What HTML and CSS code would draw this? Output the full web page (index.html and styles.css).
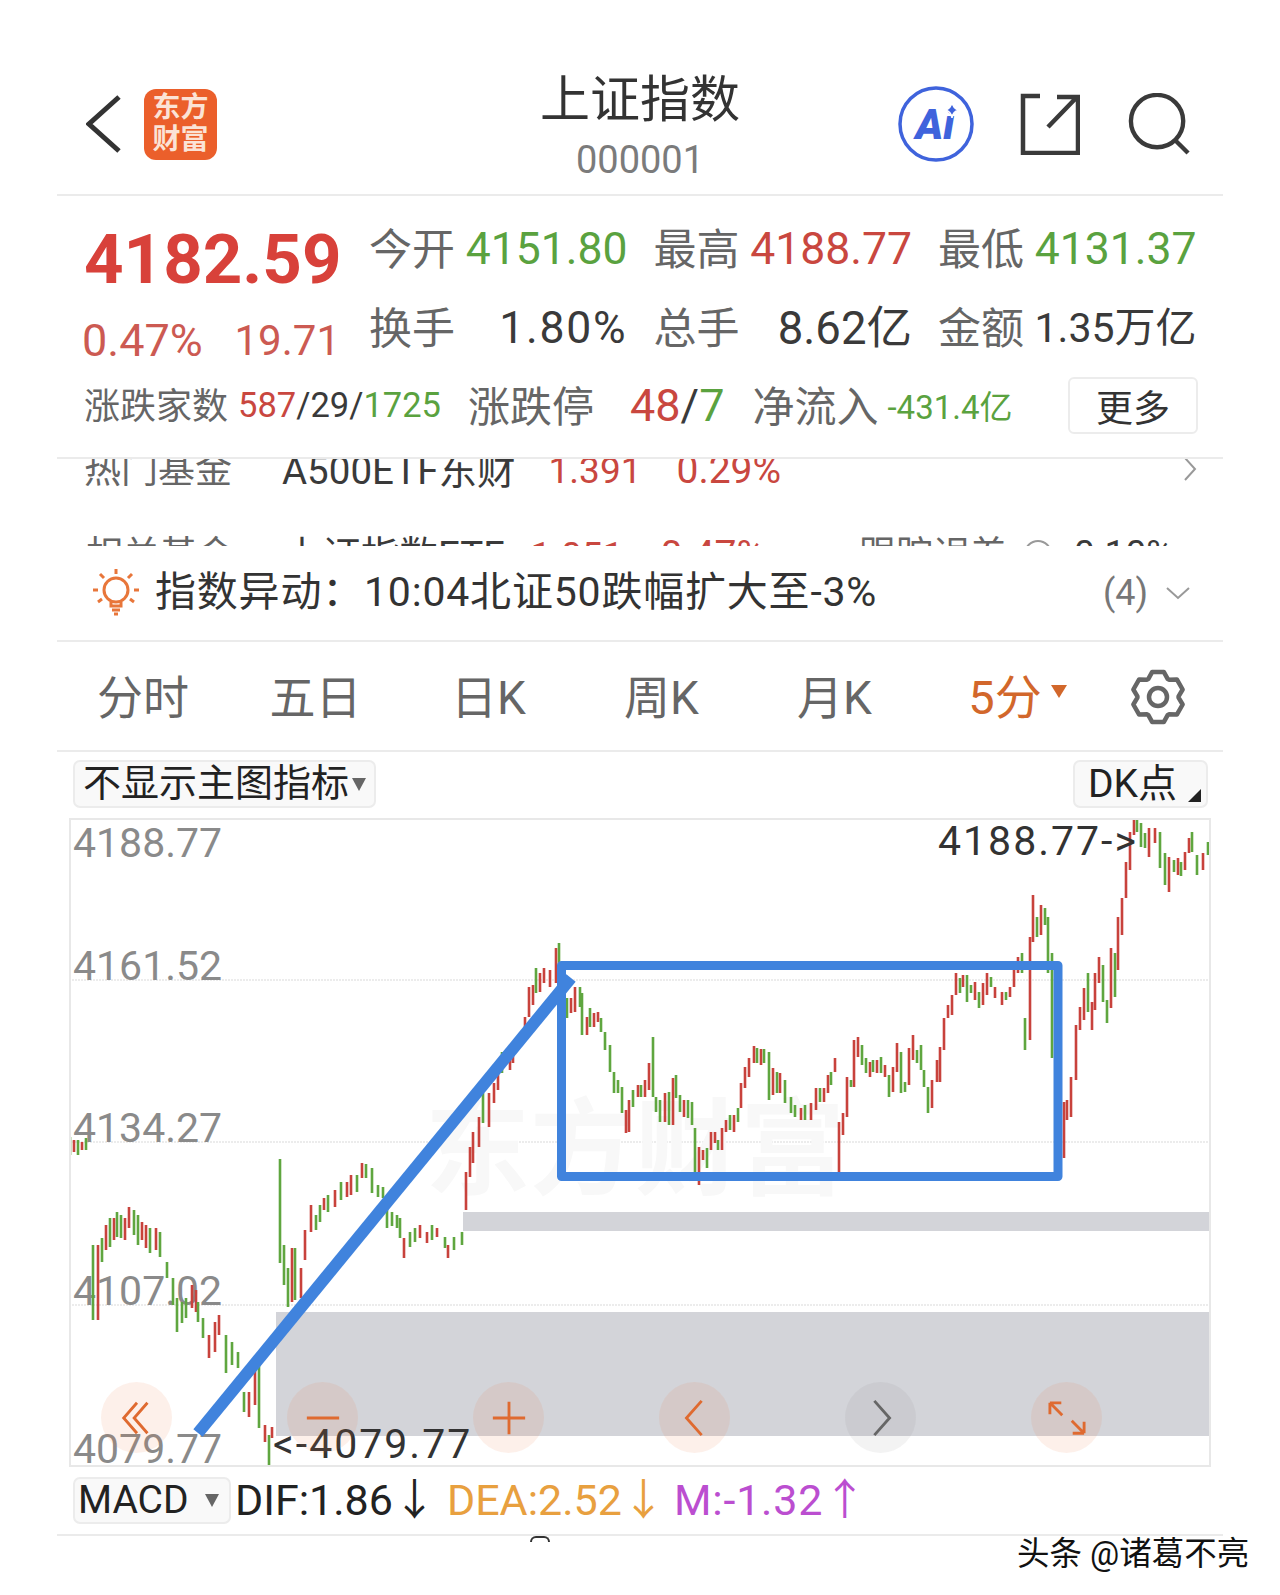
FILE: index.html

```html
<!DOCTYPE html>
<html lang="zh-CN">
<head>
  <meta charset="UTF-8">
  <title>上证指数</title>
  <link rel="stylesheet" href="styles.css">
</head>
<body>
<div class="page">
  <div class="screen">

    <header class="top-bar">
      <div class="top-left">
        <svg class="back-icon" viewBox="0 0 36 60"><path d="M33 3 L3 30 L33 57"/></svg>
        <div class="logo"><span>东方</span><span>财富</span></div>
      </div>
      <div class="top-title">
        <h1>上证指数</h1>
        <div class="code">000001</div>
      </div>
      <div class="top-right">
        <svg class="ai-icon" viewBox="0 0 76 76">
          <circle cx="38" cy="38" r="36"/>
          <text x="37" y="53">Ai</text>
          <path d="M54 16 Q55 23 61 24 Q55 25 54 32 Q53 25 47 24 Q53 23 54 16Z"/>
        </svg>
        <svg class="line-icon" viewBox="0 0 62 62"><path d="M22 3 H5 V60 H60 V25 M30 34 L59 4 M39 4 H60 V25"/></svg>
        <svg class="line-icon" viewBox="0 0 64 64"><circle cx="30" cy="29" r="27"/><path d="M49 49 L62 62"/></svg>
      </div>
    </header>

    <section class="quote">
      <div class="quote-main">
        <div class="price-box">
          <div class="price">4182.59</div>
          <div class="change"><span>0.47%</span><span class="change-num">19.71</span></div>
        </div>
        <div class="stat-grid">
          <div class="stat"><span class="label">今开</span><span class="green">4151.80</span></div>
          <div class="stat"><span class="label">最高</span><span class="red">4188.77</span></div>
          <div class="stat"><span class="label">最低</span><span class="green">4131.37</span></div>
          <div class="stat"><span class="label">换手</span><span class="stat-wide">1.80%</span></div>
          <div class="stat"><span class="label">总手</span><span class="stat-cjk">8.62亿</span></div>
          <div class="stat"><span class="label">金额</span><span class="stat-cjk stat-small">1.35万亿</span></div>
        </div>
      </div>
      <div class="quote-extra">
        <span class="label extra-count">涨跌家数</span>
        <span class="extra-nums"><span class="red">587</span>/29/<span class="green">1725</span></span>
        <span class="label extra-limit">涨跌停</span>
        <span class="limit-nums"><span class="red">48</span>/<span class="green">7</span></span>
        <span class="label extra-flow">净流入</span>
        <span class="flow-num green">-431.4亿</span>
        <button class="more-btn">更多</button>
      </div>
    </section>

    <section class="funds">
      <div class="fund-row first">
        <span class="label fund-name">热门基金</span>
        <span class="fund-title">A500ETF东财</span>
        <span class="red fund-val">1.391</span>
        <span class="red fund-pct">0.29%</span>
        <svg class="fund-arrow" viewBox="0 0 14 26"><path d="M2 2 L12 13 L2 24"/></svg>
      </div>
      <div class="fund-row second">
        <span class="label fund-name">相关基金</span>
        <span class="fund-title">上证指数ETF</span>
        <span class="red fund-val">1.051</span>
        <span class="red fund-pct">0.47%</span>
        <span class="label fund-track">跟踪误差</span>
        <span class="track-dot"></span>
        <span class="fund-track-val">0.10%</span>
      </div>
    </section>

    <section class="alert">
      <svg class="bulb" viewBox="0 0 48 50">
        <circle cx="24" cy="22" r="12"/>
        <path d="M19 34 V38 H29 V34 M20 42 H28 M22 46 H26"/>
        <path d="M24 1 V6 M8 6 L12 10 M40 6 L36 10 M1 22 H6 M42 22 H47 M6 34 L10 31 M42 34 L38 31"/>
      </svg>
      <span class="alert-text">指数异动：10:04北证50跌幅扩大至-3%</span>
      <span class="alert-count">(4)</span>
      <svg class="alert-arrow" viewBox="0 0 26 14"><path d="M2 2 L13 12 L24 2"/></svg>
    </section>

    <nav class="tabs">
      <a class="tab first-tab">分时</a>
      <a class="tab">五日</a>
      <a class="tab">日K</a>
      <a class="tab">周K</a>
      <a class="tab">月K</a>
      <a class="tab active">5分<i class="tab-caret"></i></a>
      <svg class="gear" viewBox="-14 -14 28 28">
        <path d="M-4.5 -8.5 L-2.7 -11.7 L2.7 -11.7 L4.5 -8.5 L5.1 -8.1 L8.8 -8.2 L11.5 -3.5 L9.6 -.3 L9.6 .3 L11.5 3.5 L8.8 8.2 L5.1 8.1 L4.5 8.5 L2.7 11.7 L-2.7 11.7 L-4.5 8.5 L-5.1 8.1 L-8.8 8.2 L-11.5 3.5 L-9.6 .3 L-9.6 -.3 L-11.5 -3.5 L-8.8 -8.2 L-5.1 -8.1Z"/>
        <circle r="4.2"/>
      </svg>
    </nav>

    <div class="chart-bar">
      <button class="chip chip-main">不显示主图指标<i class="chip-caret"></i></button>
      <button class="chip chip-dk">DK点<i class="chip-corner"></i></button>
    </div>

    <div class="chart">
      <!-- viewBox uses page coordinates so the candles can be read straight off the picture -->
      <svg class="chart-svg" viewBox="69 818 1142 649">
        <rect class="zone" x="463" y="1212" width="748" height="19"/>
        <rect class="zone" x="276" y="1312" width="935" height="124"/>
        <path class="grid" d="M69 980 H1211 M69 1142 H1211 M69 1305 H1211"/>
        <text class="watermark" x="425" y="1186">东方财富</text>
        <text class="axis" x="73" y="857">4188.77</text>
        <text class="axis" x="73" y="980">4161.52</text>
        <text class="axis" x="73" y="1142">4134.27</text>
        <text class="axis" x="73" y="1305">4107.02</text>
        <text class="axis" x="73" y="1463">4079.77</text>

        <path class="up" d="M74 1140V1152 M82 1142V1150 M98 1245V1320 M106 1225V1250 M114 1218V1240 M125 1218V1240 M129 1207V1228 M142 1222V1240 M146 1225V1248 M156 1228V1250 M192 1285V1308 M196 1290V1312 M209 1335V1358 M215 1322V1352 M219 1315V1335 M249 1392V1417 M255 1365V1405 M265 1425V1442 M272 1427V1438 M292 1248V1302 M301 1268V1298 M305 1230V1260 M311 1205V1232 M324 1198V1210 M335 1190V1207 M347 1182V1197 M351 1175V1195 M362 1163V1178 M404 1238V1258 M420 1225V1238 M427 1232V1243 M437 1228V1237 M448 1245V1258 M466 1172V1210 M470 1147V1177 M473 1132V1163 M479 1117V1147 M489 1093V1127 M494 1083V1103 M498 1073V1090 M510 1057V1070 M513 1043V1063 M525 1017V1040 M529 987V1017 M533 985V1005 M540 973V992 M544 968V983 M550 970V987 M556 948V983 M571 998V1013 M575 987V1012 M587 1017V1035 M594 1013V1027 M598 1012V1022 M626 1110V1133 M629 1100V1132 M638 1085V1097 M645 1080V1097 M649 1063V1090 M665 1093V1122 M673 1078V1125 M684 1100V1117 M699 1147V1185 M703 1150V1160 M711 1132V1150 M715 1132V1143 M722 1128V1150 M726 1120V1132 M734 1115V1132 M741 1083V1108 M745 1067V1088 M749 1058V1077 M754 1046V1063 M761 1049V1065 M773 1068V1095 M780 1073V1093 M801 1108V1120 M811 1103V1120 M816 1088V1110 M824 1088V1102 M828 1075V1093 M835 1058V1072 M839 1122V1172 M843 1113V1135 M847 1077V1117 M854 1040V1087 M858 1037V1057 M870 1062V1077 M877 1060V1073 M885 1065V1077 M893 1067V1092 M897 1043V1072 M909 1048V1085 M913 1035V1060 M932 1080V1108 M937 1060V1082 M940 1047V1082 M944 1018V1050 M948 1005V1018 M952 995V1015 M956 973V995 M963 975V987 M975 982V1000 M983 983V1005 M987 973V995 M995 987V998 M1002 992V1005 M1010 987V997 M1014 968V987 M1018 957V973 M1030 937V1040 M1033 895V942 M1041 905V935 M1064 1102V1158 M1067 1100V1120 M1071 1077V1117 M1076 1025V1080 M1080 1007V1030 M1084 988V1020 M1092 1002V1030 M1095 973V1010 M1099 957V983 M1111 948V1008 M1118 917V970 M1122 898V935 M1126 862V898 M1130 832V870 M1134 820V835 M1149 828V857 M1155 828V843 M1169 857V892 M1178 858V875 M1185 852V870 M1189 838V853 M1203 853V870"/>

        <path class="down" d="M70 1137V1155 M78 1140V1155 M86 1138V1150 M93 1245V1320 M102 1238V1262 M110 1218V1247 M117 1212V1237 M121 1215V1238 M134 1210V1235 M138 1215V1245 M150 1228V1253 M160 1232V1257 M167 1262V1278 M173 1278V1305 M177 1298V1332 M182 1302V1323 M186 1298V1318 M198 1302V1322 M203 1318V1338 M226 1335V1373 M232 1342V1365 M238 1352V1368 M244 1392V1412 M259 1362V1428 M269 1435V1467 M280 1159V1263 M284 1245V1285 M288 1268V1307 M295 1248V1300 M316 1215V1230 M320 1205V1222 M328 1195V1212 M341 1182V1200 M357 1175V1192 M366 1164V1178 M372 1168V1193 M378 1185V1197 M383 1187V1198 M387 1208V1228 M392 1212V1226 M397 1215V1228 M400 1218V1238 M410 1232V1247 M415 1228V1242 M432 1225V1240 M445 1237V1248 M454 1237V1250 M462 1232V1245 M483 1093V1123 M502 1052V1073 M536 968V993 M559 943V973 M567 998V1018 M580 987V1007 M582 993V1035 M590 1008V1027 M601 1018V1032 M605 1032V1050 M610 1045V1072 M614 1072V1093 M618 1080V1093 M622 1087V1113 M633 1090V1107 M641 1085V1097 M653 1037V1097 M656 1097V1112 M660 1100V1122 M669 1092V1125 M676 1075V1098 M680 1095V1112 M688 1100V1118 M692 1102V1125 M695 1128V1172 M707 1148V1168 M718 1140V1150 M730 1115V1130 M738 1108V1122 M757 1048V1063 M764 1049V1063 M769 1052V1100 M777 1072V1093 M785 1080V1103 M791 1097V1113 M795 1105V1117 M805 1105V1120 M820 1088V1102 M831 1072V1085 M851 1080V1087 M862 1045V1065 M866 1058V1073 M873 1060V1072 M881 1057V1073 M889 1075V1097 M901 1052V1093 M905 1082V1092 M917 1050V1063 M921 1045V1070 M924 1070V1087 M928 1087V1113 M960 978V993 M967 975V1002 M971 985V993 M979 992V1008 M991 977V987 M1006 992V1000 M1022 953V973 M1025 1018V1050 M1037 917V937 M1045 908V925 M1048 917V973 M1052 953V1058 M1088 973V1012 M1103 965V1002 M1107 1000V1023 M1115 953V997 M1137 817V832 M1141 823V847 M1145 833V848 M1160 832V868 M1165 853V885 M1174 860V872 M1181 862V876 M1192 832V852 M1197 855V875 M1208 842V855"/>

        <text class="mark" x="938" y="855">4188.77-&gt;</text>
        <text class="mark" x="273" y="1458">&lt;-4079.77</text>

        <path class="blue-line" d="M198 1433 L571 978"/>
        <rect class="blue-box" x="561.5" y="965.5" width="496.5" height="211"/>
      </svg>

      <div class="chart-btns">
        <a class="round-btn"><svg viewBox="0 0 40 40"><path class="btn-o" d="M20 4 L6 20 L20 36 M31 4 L17 20 L31 36"/></svg></a>
        <a class="round-btn"><svg viewBox="0 0 40 40"><path class="btn-o" d="M3 20 H37"/></svg></a>
        <a class="round-btn"><svg viewBox="0 0 40 40"><path class="btn-o" d="M3 20 H37 M20 3 V37"/></svg></a>
        <a class="round-btn"><svg viewBox="0 0 40 40"><path class="btn-o" d="M27 2 L11 20 L27 38"/></svg></a>
        <a class="round-btn grey"><svg viewBox="0 0 40 40"><path class="btn-g" d="M13 2 L29 20 L13 38"/></svg></a>
        <a class="round-btn"><svg viewBox="0 0 40 40"><path class="btn-o" d="M2 4 H14 M2 4 V16 M2 4 L15 17 M38 36 H26 M38 36 V24 M38 36 L25 23"/></svg></a>
      </div>
    </div>

    <div class="macd-row">
      <button class="chip chip-macd">MACD<i class="chip-caret macd-caret"></i></button>
      <span class="macd-val">DIF:1.86<span class="arrow">↓</span></span>
      <span class="macd-val dea">DEA:2.52<span class="arrow">↓</span></span>
      <span class="macd-val m">M:-1.32<span class="arrow">↑</span></span>
    </div>
    <div class="next-top"></div>
  </div>

  <div class="credit">头条 @诸葛不亮</div>
</div>
</body>
</html>
```

FILE: styles.css

```css
* {
  box-sizing: border-box;
}
html, body {
  margin: 0;
  padding: 0;
  background: #fff;
}
body {
  font-family: Roboto, "Noto Sans CJK SC", sans-serif;
  color: #3a3a3a;
}
button {
  font-family: inherit;
  cursor: pointer;
}
.page {
  position: relative;
  width: 1280px;
  height: 1595px;
  overflow: hidden;
}
.screen {
  width: 1166px;
  margin-left: 57px;
  padding-top: 61px;
}
.red { color: #c9473f; }
.green { color: #5aa23f; }
.label { color: #666; }

/* top bar */
.top-bar {
  display: grid;
  grid-template-columns: 1fr auto 1fr;
  height: 135px;
  border-bottom: 2px solid #ebebeb;
}
.top-left {
  display: flex;
  align-items: center;
  height: 126px;
  padding-left: 29px;
}
.back-icon {
  width: 36px;
  height: 60px;
  margin-right: 22px;
}
.back-icon path {
  fill: none;
  stroke: #333;
  stroke-width: 5;
}
.logo {
  display: flex;
  flex-direction: column;
  align-items: center;
  justify-content: center;
  width: 73px;
  height: 71px;
  background: #eb5f2b;
  border-radius: 12px;
  color: #fbe3d6;
  font-size: 28px;
  font-weight: 700;
  line-height: 32px;
}
.top-title {
  text-align: center;
  padding-top: 9px;
}
.top-title h1 {
  margin: 0;
  font-size: 50px;
  font-weight: 400;
  line-height: 60px;
  color: #333;
}
.code {
  margin-top: 8px;
  font-size: 38px;
  line-height: 44px;
  color: #7b7b7b;
}
.top-right {
  display: flex;
  align-items: center;
  justify-content: flex-end;
  height: 126px;
  padding-right: 33px;
}
.ai-icon {
  width: 76px;
  height: 76px;
  margin-right: 44px;
}
.ai-icon circle {
  fill: none;
  stroke: #3f63dc;
  stroke-width: 3.5;
}
.ai-icon text {
  font-size: 42px;
  font-weight: 900;
  font-style: italic;
  text-anchor: middle;
  fill: #3f63dc;
}
.ai-icon path {
  fill: #3f63dc;
  stroke: #fff;
  stroke-width: 1.5;
}
.line-icon {
  width: 62px;
  height: 62px;
  margin-left: 0;
}
.line-icon + .line-icon {
  margin-left: 48px;
}
.line-icon path, .line-icon circle {
  fill: none;
  stroke: #3a3a3a;
  stroke-width: 4.5;
}

/* quote block */
.quote {
  height: 263px;
  padding-top: 13px;
  border-bottom: 2px solid #ebebeb;
}
.quote-main {
  display: flex;
}
.price-box {
  width: 312px;
  padding-left: 27px;
}
.price {
  margin-top: 16px;
  font-size: 69px;
  font-weight: 700;
  line-height: 70px;
  color: #d8413a;
}
.change {
  display: flex;
  justify-content: space-between;
  width: 258px;
  margin-top: 24px;
  margin-left: -2px;
  font-size: 45px;
  line-height: 44px;
  color: #cc5a52;
}
.change-num {
  font-size: 42px;
}
.stat-grid {
  display: grid;
  grid-template-columns: repeat(3, 258.5px);
  column-gap: 26px;
  grid-auto-rows: 79px;
}
.stat {
  display: flex;
  justify-content: space-between;
  align-items: center;
  font-size: 44.5px;
  white-space: nowrap;
}
.stat .label {
  margin-top: -6px;
  font-size: 43px;
}
.stat-wide {
  letter-spacing: 1.8px;
}
.stat-cjk {
  margin-top: -7px;
  font-size: 45.5px;
}
.stat-cjk.stat-small {
  font-size: 41px;
}
.quote-extra {
  display: flex;
  align-items: center;
  height: 76px;
  padding-left: 27px;
}
.quote-extra .label {
  margin-top: -4px;
}
.extra-count {
  font-size: 36px;
}
.extra-nums {
  margin-left: 10px;
  font-size: 34.5px;
}
.extra-limit {
  margin-left: 27px;
  font-size: 42px;
}
.limit-nums {
  margin-left: 36px;
  font-size: 45px;
}
.extra-flow {
  margin-left: 28px;
  font-size: 42px;
}
.flow-num {
  margin-left: 9px;
  font-size: 33px;
}
.more-btn {
  width: 130px;
  height: 57px;
  margin-left: auto;
  margin-right: 25px;
  padding: 0;
  background: #fff;
  border: 2px solid #ececec;
  border-radius: 6px;
  color: #333;
  font-size: 37px;
}

/* fund rows, cut off by the scroll area */
.funds {
  height: 87px;
  overflow: hidden;
}
.fund-row {
  display: flex;
  align-items: center;
  height: 85px;
  font-size: 37px;
  white-space: nowrap;
}
.fund-row.first {
  margin-top: -33px;
  padding-left: 27px;
}
.fund-row.second {
  padding-left: 29px;
}
.fund-row .label {
  margin-top: -4px;
}
.fund-name {
  width: 198px;
}
.fund-title {
  margin-top: -4px;
  font-size: 38.5px;
}
.fund-pct {
  font-size: 39px;
}
.fund-val, .fund-pct {
  margin-top: 3px;
}
.first .fund-val {
  margin-left: 33px;
}
.first .fund-pct {
  margin-left: 35px;
}
.second .fund-val {
  margin-left: 26px;
}
.second .fund-pct {
  margin-left: 37px;
}
.fund-arrow {
  width: 14px;
  height: 26px;
  margin-left: auto;
  margin-right: 26px;
}
.fund-arrow path {
  fill: none;
  stroke: #999;
  stroke-width: 2;
}
.fund-track {
  margin-left: 94px;
}
.track-dot {
  width: 28px;
  height: 28px;
  margin-left: 17px;
  border: 2px solid #999;
  border-radius: 50%;
}
.fund-track-val {
  margin-left: 22px;
}

/* alert */
.alert {
  display: flex;
  align-items: center;
  height: 96px;
  padding-left: 35px;
  border-bottom: 2px solid #ebebeb;
}
.bulb {
  width: 48px;
  height: 50px;
  margin-right: 15px;
}
.bulb circle, .bulb path {
  fill: none;
  stroke: #e8763a;
  stroke-width: 3;
}
.alert-text {
  font-size: 41px;
  letter-spacing: .8px;
  color: #333;
  margin-top: -10px;
}
.alert-count {
  margin-left: auto;
  font-size: 36px;
  color: #777;
}
.alert-arrow {
  width: 26px;
  height: 14px;
  margin: 0 32px 0 17px;
}
.alert-arrow path {
  fill: none;
  stroke: #999;
  stroke-width: 2;
}

/* period tabs */
.tabs {
  display: flex;
  align-items: center;
  height: 110px;
  border-bottom: 2px solid #ebebeb;
}
.tab {
  width: 173px;
  margin-top: -5px;
  text-align: center;
  font-size: 46px;
  color: #666;
}
.first-tab {
  width: 172px;
}
.tab.active {
  position: relative;
  width: 168px;
  font-size: 47px;
  color: #d2672b;
}
.tab-caret {
  position: absolute;
  left: 130px;
  top: 26px;
  border-left: 8px solid transparent;
  border-right: 8px solid transparent;
  border-top: 13px solid #d2672b;
}
.gear {
  width: 60px;
  height: 60px;
  margin-left: 39px;
  margin-top: 1px;
}
.gear path, .gear circle {
  fill: none;
  stroke: #666;
  stroke-width: 2.1;
  stroke-linejoin: round;
}

/* chart */
.chart-bar {
  display: flex;
  justify-content: space-between;
  height: 66px;
  padding: 8px 15px 0 16px;
}
.chip {
  height: 48px;
  padding: 0;
  background: #f9f9f9;
  border: 2px solid #ececec;
  border-radius: 7px;
  color: #222;
}
.chip-main {
  display: flex;
  align-items: center;
  width: 303px;
  padding: 0 0 10px 8px;
  font-size: 38px;
}
.chip-caret {
  margin-left: 3px;
  margin-top: 10px;
  border-left: 7px solid transparent;
  border-right: 7px solid transparent;
  border-top: 13px solid #666;
}
.chip-dk {
  position: relative;
  display: flex;
  align-items: center;
  width: 135px;
  padding: 0 0 8px 13px;
  font-size: 39px;
}
.chip-corner {
  position: absolute;
  right: 5px;
  bottom: 4px;
  border-left: 13px solid transparent;
  border-bottom: 13px solid #222;
}
.chart {
  position: relative;
  width: 1142px;
  height: 649px;
  margin-left: 12px;
  outline: 2px solid #e8e8e8;
  outline-offset: -2px;
}
.chart-svg {
  display: block;
  width: 1142px;
  height: 649px;
}
.zone { fill: #d3d4d9; }
.grid {
  fill: none;
  stroke: #e6e6e6;
  stroke-width: 1.5;
  stroke-dasharray: 2 1;
}
.watermark {
  font-size: 105px;
  font-weight: 700;
  fill: #f8f8f8;
}
.axis {
  font-size: 41px;
  fill: #8a8a8a;
}
.mark {
  font-size: 41px;
  fill: #333;
  letter-spacing: 2px;
}
.up, .down {
  fill: none;
  stroke-width: 2.6;
}
.up { stroke: #c8423c; }
.down { stroke: #5fa63f; }
.blue-line {
  fill: none;
  stroke: #4083dd;
  stroke-width: 12;
}
.blue-box {
  fill: none;
  stroke: #4083dd;
  stroke-width: 9;
  stroke-linejoin: round;
}
.chart-btns {
  position: absolute;
  left: 32px;
  top: 564px;
  display: flex;
  gap: 115px;
}
.round-btn {
  display: flex;
  align-items: center;
  justify-content: center;
  width: 71px;
  height: 71px;
  border-radius: 50%;
  background: rgba(236, 120, 60, .11);
}
.round-btn.grey {
  background: rgba(120, 120, 120, .09);
}
.round-btn svg {
  width: 38px;
  height: 38px;
}
.btn-o, .btn-g {
  fill: none;
  stroke-width: 3;
}
.btn-o { stroke: #df6a30; }
.btn-g { stroke: #666; }

/* macd line */
.macd-row {
  display: flex;
  align-items: center;
  height: 69px;
  padding-left: 16px;
  border-bottom: 2px solid #ebebeb;
  font-size: 43px;
}
.chip-macd {
  display: flex;
  align-items: center;
  width: 158px;
  height: 47px;
  padding: 0 0 2px 3px;
  font-size: 39px;
}
.macd-caret {
  margin-left: 16px;
  margin-top: 2px;
}
.macd-val {
  margin-left: 4px;
  margin-top: -9px;
  color: #222;
  white-space: nowrap;
}
.macd-val.dea {
  margin-left: 11px;
  color: #e8a03f;
}
.macd-val.m {
  margin-left: 9px;
  letter-spacing: .8px;
  color: #bb4ed0;
}
.arrow {
  font-family: "Noto Sans CJK SC", sans-serif;
  font-size: 43px;
}
.next-top {
  width: 20px;
  height: 6px;
  margin-left: 473px;
  border: 2px solid #333;
  border-bottom: none;
  border-radius: 6px 6px 0 0;
}
.credit {
  position: absolute;
  left: 1017px;
  top: 1527px;
  font-size: 32.5px;
  color: #111;
  text-shadow: 1px 1px 0 #fff, -1px 0 0 #fff;
  white-space: nowrap;
}
```
